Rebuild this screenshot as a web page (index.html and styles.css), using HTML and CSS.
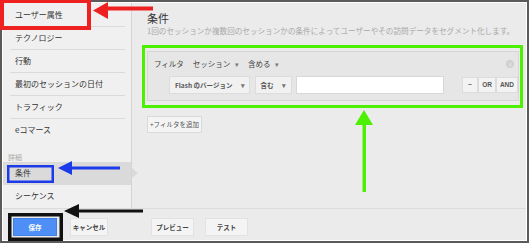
FILE: index.html
```html
<!DOCTYPE html>
<html lang="ja">

<head>
    <meta charset="UTF-8">
    <title>セグメント</title>
    <link rel="stylesheet" href="styles.css">
</head>

<body>
    <div class="frame">
        <div class="content">
            <div class="side">
                <ul class="side-list">
                    <li class="side-item">ユーザー属性</li>
                    <li class="side-item">テクノロジー</li>
                    <li class="side-item">行動</li>
                    <li class="side-item">最初のセッションの日付</li>
                    <li class="side-item">トラフィック</li>
                    <li class="side-item last">eコマース</li>
                </ul>
                <div class="side-head">詳細</div>
                <ul class="side-list">
                    <li class="side-item active">条件</li>
                    <li class="side-item last">シーケンス</li>
                </ul>
            </div>
            <div class="main">
                <h1 class="title">条件</h1>
                <p class="desc">1回のセッションか複数回のセッションかの条件によってユーザーやその訪問データをセグメント化します。</p>
                <div class="filter">
                    <div class="filter-top">
                        <span class="lbl">フィルタ</span>
                        <span class="drop">セッション <i class="caret">▾</i></span>
                        <span class="drop">含める <i class="caret">▾</i></span>
                        <span class="close">×</span>
                    </div>
                    <div class="filter-row">
                        <div class="sel sel-dim">Flash のバージョン <i class="caret">▾</i></div>
                        <div class="sel sel-op">含む <i class="caret">▾</i></div>
                        <div class="field"></div>
                        <div class="logic">
                            <span class="logic-btn">−</span>
                            <span class="logic-btn">OR</span>
                            <span class="logic-btn">AND</span>
                        </div>
                    </div>
                </div>
                <div class="add">+フィルタを追加</div>
            </div>
        </div>
        <div class="bar">
            <span class="btn primary">保存</span>
            <span class="btn cancel">キャンセル</span>
            <span class="btn preview">プレビュー</span>
            <span class="btn">テスト</span>
        </div>

        <!-- annotations drawn over the screenshot -->
        <svg class="marks" width="529" height="243" viewBox="0 0 529 243">
            <rect x="2" y="1" width="87" height="27" fill="none" stroke="#ee2020" stroke-width="4" />
            <rect x="106" y="6.5" width="47" height="4" fill="#ee2020" />
            <polygon points="93,10.5 108,2 108,19" fill="#ee2020" />

            <rect x="8.25" y="166.25" width="44.5" height="15.5" fill="none" stroke="#1c3ae8" stroke-width="2.5" />
            <rect x="70" y="166.5" width="50" height="3" fill="#1c3ae8" />
            <polygon points="58,168 72,161 72,175" fill="#1c3ae8" />

            <rect x="9.75" y="214.75" width="51.5" height="24.5" fill="none" stroke="#111" stroke-width="3.5" />
            <rect x="77" y="209.5" width="66" height="3" fill="#111" />
            <polygon points="64,211 79,204 79,218" fill="#111" />

            <rect x="143.5" y="46.5" width="378" height="60" fill="none" stroke="#4cf000" stroke-width="3" />
            <rect x="362.5" y="123" width="3.5" height="69" fill="#4cf000" />
            <polygon points="364,110 355,125 373,125" fill="#4cf000" />
        </svg>
    </div>
</body>

</html>
```

FILE: styles.css
```css
* {
    box-sizing: border-box;
}

body {
    margin: 0;
    font-family: "Noto Sans CJK JP", sans-serif;
    color: #333;
}

.frame {
    position: relative;
    width: 529px;
    height: 243px;
    border: 2px solid #5a5a5a;
    padding: 1px;
    background-color: #fff;
    display: flex;
    flex-direction: column;
}

.content {
    display: flex;
    height: 205px;
}

/* left menu */
.side {
    width: 129px;
    background-color: #f0f0f0;
    border-right: 1px solid #d4d4d4;
    padding-top: 1px;
}

.side-list {
    list-style: none;
    margin: 0;
    padding: 0;
}

.side-item {
    position: relative;
    height: 23px;
    line-height: 22px;
    margin: 0 6px 0 7px;
    padding-left: 5px;
    font-size: 8px;
    border-bottom: 1px solid #dadada;
}

.side-item.last {
    border-bottom: none;
}

.side-item.active {
    margin: 0;
    padding-left: 12px;
    background-color: #dadada;
    border-bottom: none;
}

.side-item.active::after {
    content: "";
    position: absolute;
    right: -7px;
    top: 6px;
    border-left: 6px solid #dadada;
    border-top: 5px solid transparent;
    border-bottom: 5px solid transparent;
}

.side-head {
    height: 20px;
    padding: 10px 0 0 5px;
    font-size: 7px;
    line-height: 10px;
    color: #aaa;
}

/* right side */
.main {
    flex: 1;
    background-color: #ebebeb;
    padding: 8px 0 0 15px;
}

.title {
    margin: 0;
    font-size: 11px;
    line-height: 14px;
    font-weight: normal;
    color: #333;
}

.desc {
    margin: 1px 0 0;
    font-size: 7.6px;
    line-height: 10px;
    color: #a8a8a8;
    white-space: nowrap;
}

.filter {
    width: 372px;
    height: 50px;
    margin-top: 15px;
    border: 1px solid #d6d6d6;
    background-color: #e6e6e6;
    padding: 7px 0 0 6px;
}

.filter-top {
    position: relative;
    display: flex;
    gap: 9px;
    font-size: 7.5px;
    line-height: 10px;
    color: #444;
}

.caret {
    font-style: normal;
    font-size: 7px;
    color: #777;
    margin-left: 3px;
}

.close {
    position: absolute;
    right: 4px;
    top: 1px;
    width: 8px;
    height: 8px;
    border-radius: 50%;
    background-color: #cfcfcf;
    color: #eee;
    font-size: 7px;
    line-height: 8px;
    text-align: center;
}

.filter-row {
    display: flex;
    align-items: center;
    margin: 7px 0 0 15px;
}

.sel {
    height: 18px;
    line-height: 16px;
    border: 1px solid #dcdcdc;
    background-color: #f1f1f1;
    font-size: 6.5px;
    font-weight: bold;
    color: #555;
    padding-left: 5px;
}

.sel-dim {
    width: 82px;
}

.sel-dim .caret {
    margin-left: 7px;
}

.sel-op {
    width: 38px;
    margin-left: 5px;
}

.sel-op .caret {
    margin-left: 7px;
}

.field {
    width: 151px;
    height: 18px;
    margin-left: 4px;
    background-color: #fff;
    border: 1px solid #d8d8d8;
}

.logic {
    display: flex;
    margin-left: 18px;
}

.logic-btn {
    height: 16px;
    line-height: 14px;
    padding: 0 3px;
    border: 1px solid #dcdcdc;
    background-color: #f3f3f3;
    font-family: "Liberation Sans", sans-serif;
    font-size: 6.5px;
    font-weight: bold;
    color: #555;
}

.logic-btn:first-child {
    width: 16px;
    text-align: center;
}

.add {
    display: inline-block;
    margin-top: 15px;
    height: 17px;
    width: 55px;
    line-height: 15px;
    border: 1px solid #dadada;
    background-color: #f4f4f4;
    font-size: 6.5px;
    color: #555;
    text-align: center;
}

/* bottom buttons */
.bar {
    flex: 1;
    display: flex;
    align-items: flex-start;
    background-color: #ebebeb;
    border-top: 1px solid #dcdcdc;
    padding: 9px 0 0 10px;
}

.btn {
    width: 43px;
    height: 18px;
    line-height: 16px;
    margin-right: 11px;
    border: 1px solid #e2e2e2;
    background-color: #f4f4f4;
    font-size: 6.5px;
    font-weight: bold;
    color: #444;
    text-align: center;
}

.btn.primary {
    width: 44px;
    background-color: #4d8ff6;
    border-color: #3f7fe6;
    color: #fff;
    margin-right: 13px;
}

.btn.cancel {
    width: 38px;
    margin-right: 43px;
}

.marks {
    position: absolute;
    left: -2px;
    top: -2px;
    pointer-events: none;
}
```
